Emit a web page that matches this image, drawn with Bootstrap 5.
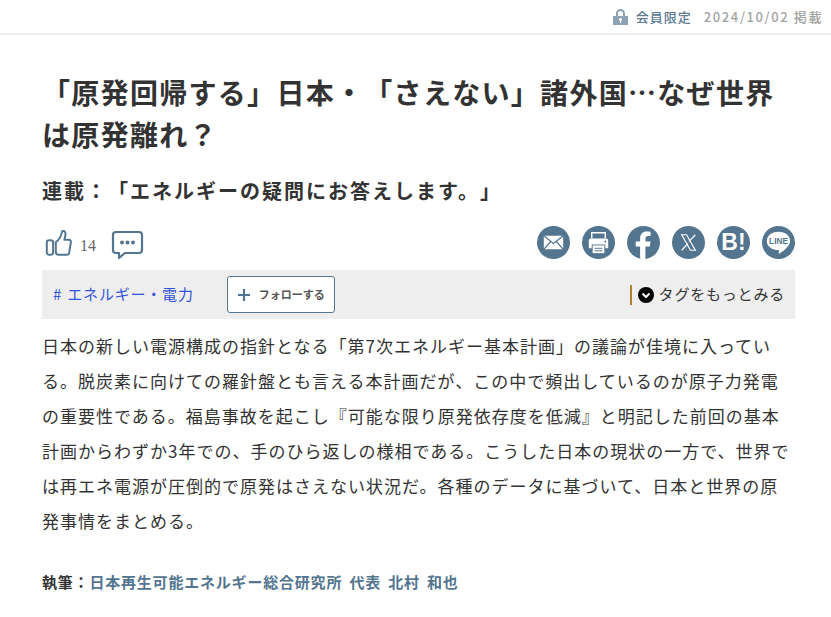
<!DOCTYPE html>
<html lang="ja"><head><meta charset="utf-8">
<link href="https://cdn.jsdelivr.net/npm/bootstrap@5.3.0/dist/css/bootstrap.min.css" rel="stylesheet">
<style>
html,body{height:617px;overflow:hidden}
body{font-family:"Noto Sans CJK JP","Liberation Sans",sans-serif;color:#333;letter-spacing:.05em;background:#fff;text-spacing-trim:space-all}
.topbar{height:35px;border-bottom:2px solid #eee;padding-right:8px;font-size:13px;font-weight:500}
.lockrow{color:#5a7a92;margin-right:12px;letter-spacing:1px}
.dateline{color:#a3a3a3;letter-spacing:1.6px}
.wrapbox{padding:0 36px 0 42px}
.headline{font-size:28px;font-weight:700;line-height:42px;margin:36px 0 0;color:#333;letter-spacing:1.3px}
.subhead{font-size:20px;font-weight:700;line-height:30px;margin:21px 0 0;color:#333;letter-spacing:2px}
.actions{margin-top:18px;height:36px}
.likes{font-size:16px;color:#666;font-family:"Liberation Serif",serif;letter-spacing:0;margin-top:7px;margin-left:8px}
.thumbicon{margin-top:2px;margin-left:3px}
.chaticon{margin-top:6px;margin-left:15px}
.sharecirc{width:33px;height:33px;border-radius:50%;background:#53758f;display:block}
.share-list{gap:12px}
.hatena{color:#fff;font:700 23px/33px "Liberation Sans",sans-serif;letter-spacing:0;text-align:center}
.tagbar{background:#eee;height:49px;margin-top:10px;padding:0 10px 0 11px}
.taglink{color:#3355dd;font-size:15px;text-decoration:none;word-spacing:1px}
.followbtn{border:1px solid #53758f;border-radius:3px;background:#fff;width:108px;height:37px;margin-left:33px;font-size:11px;font-weight:700;color:#555;letter-spacing:0}
.moretags{border-left:2px solid #a9822f;height:20px;font-size:15px;color:#333;padding-left:6px;gap:5px}
.bodytext{font-size:17px;letter-spacing:1px;line-height:35px;margin:9px 0 0;color:#333}
.byline{font-size:15px;font-weight:700;line-height:22px;margin-top:33px;color:#333;word-spacing:3px}
.byname{color:#53758f}
</style></head><body>
<div class="topbar d-flex justify-content-end align-items-center">
<span class="lockrow d-flex align-items-center gap-2">
<svg width="15" height="16" viewBox="0 0 15 16"><path fill="#8ba3b5" d="M0 7h15v9H0zM3 7V4.500a4.500 4.500 0 0 1 9 0V7H10V4.500a2.500 2.500 0 0 0-5 0V7z"/><circle cx="7.500" cy="10.500" r="1.500" fill="#fff"/><rect x="7" y="11" width="1" height="3" fill="#fff"/></svg>
会員限定</span>
<span class="dateline">2024/10/02 掲載</span>
</div>
<main class="wrapbox">
<h1 class="headline">「原発回帰する」日本・「さえない」諸外国…なぜ世界は原発離れ？</h1>
<h2 class="subhead">連載：「エネルギーの疑問にお答えします。」</h2>
<div class="actions d-flex justify-content-between align-items-center">
<div class="d-flex align-items-center">
<svg class="thumbicon" width="27" height="28" viewBox="0 0 30 30" fill="none" stroke="#53758f" stroke-width="2.200"><rect x="2" y="12" width="7" height="16" rx="2.500"/><path d="M12 14c3-2 6-6 7-12 3-1 4.500 1.500 3.500 5l-1 4.500h5c1.500 0 2.500 1 2.300 2.500l-2 12c-.2 1.500-1 2-2.500 2H15c-2 0-3-1-3-3z" stroke-linejoin="round"/></svg>
<span class="likes">14</span>
<svg class="chaticon" width="33" height="30" viewBox="0 0 33 30" fill="none"><path d="M5 2h23a3 3 0 0 1 3 3v15a3 3 0 0 1-3 3H14l-6 5v-5H5a3 3 0 0 1-3-3V5a3 3 0 0 1 3-3z" stroke="#53758f" stroke-width="2.200" stroke-linejoin="round"/><circle cx="11" cy="12.500" r="2" fill="#53758f"/><circle cx="16.500" cy="12.500" r="2" fill="#53758f"/><circle cx="22" cy="12.500" r="2" fill="#53758f"/></svg>
</div>
<div class="d-flex share-list">
<svg class="sharecirc" viewBox="0 0 34 34"><rect x="7" y="10" width="20" height="14" rx="1" fill="#fff"/><path d="M7 10l10 8 10-8M7 24l7-8M27 24l-7-8" fill="none" stroke="#53758f" stroke-width="1.300"/></svg>
<svg class="sharecirc" viewBox="0 0 34 34"><path d="M10 13V7h14v6" fill="none" stroke="#fff" stroke-width="1.500"/><path d="M7 15a2 2 0 0 1 2-2h16a2 2 0 0 1 2 2v8h-3v-4H10v4H7z" fill="#fff"/><rect x="11" y="20" width="12" height="8" fill="#fff"/><path d="M13 23h8M13 25.500h8" stroke="#53758f" stroke-width="1"/><circle cx="24" cy="16" r="1" fill="#53758f"/></svg>
<svg class="sharecirc" viewBox="0 0 34 34"><path d="M19 34V21h4.500l.8-5H19v-3c0-1.500.7-2.800 3-2.800h2.300V6c-1-.2-2.500-.4-4-.4-4 0-6.800 2.500-6.800 7V16H9v5h4.500v13z" fill="#fff"/></svg>
<svg class="sharecirc" viewBox="0 0 34 34"><path d="M10 9h5l9 16h-5zM24 9l-6.500 7M10 25l6.500-7" fill="none" stroke="#fff" stroke-width="1.200"/></svg>
<span class="sharecirc hatena">B!</span>
<svg class="sharecirc" viewBox="0 0 34 34"><path d="M17 6c7 0 12 4 12 9.500 0 5-6 9.500-11 13-.5.300-1 0-.8-.6l.4-2.900C10 25 5 21 5 15.500 5 10 10 6 17 6z" fill="#fff"/><text x="17" y="19" text-anchor="middle" font-family="Liberation Sans" font-weight="700" font-size="8.500" letter-spacing="0" fill="#53758f">LINE</text></svg>
</div>
</div>
<div class="tagbar d-flex align-items-center">
<a class="taglink" href="#"># エネルギー・電力</a>
<button class="followbtn d-flex align-items-center justify-content-center gap-2 p-0" type="button"><svg width="14" height="14" viewBox="0 0 14 14"><path d="M7 1v12M1 7h12" stroke="#53758f" stroke-width="2.200"/></svg>フォローする</button>
<div class="moretags ms-auto d-flex align-items-center">
<svg width="16" height="16" viewBox="0 0 16 16"><circle cx="8" cy="8" r="8" fill="#000"/><path d="M4.500 6.500L8 10l3.500-3.500" fill="none" stroke="#fff" stroke-width="2"/></svg>タグをもっとみる</div>
</div>
<p class="bodytext">日本の新しい電源構成の指針となる「第7次エネルギー基本計画」の議論が佳境に入っている。脱炭素に向けての羅針盤とも言える本計画だが、この中で頻出しているのが原子力発電の重要性である。福島事故を起こし『可能な限り原発依存度を低減』と明記した前回の基本計画からわずか3年での、手のひら返しの様相である。こうした日本の現状の一方で、世界では再エネ電源が圧倒的で原発はさえない状況だ。各種のデータに基づいて、日本と世界の原発事情をまとめる。</p>
<div class="byline">執筆：<span class="byname">日本再生可能エネルギー総合研究所 代表 北村 和也</span></div>
</main>
</body></html>
